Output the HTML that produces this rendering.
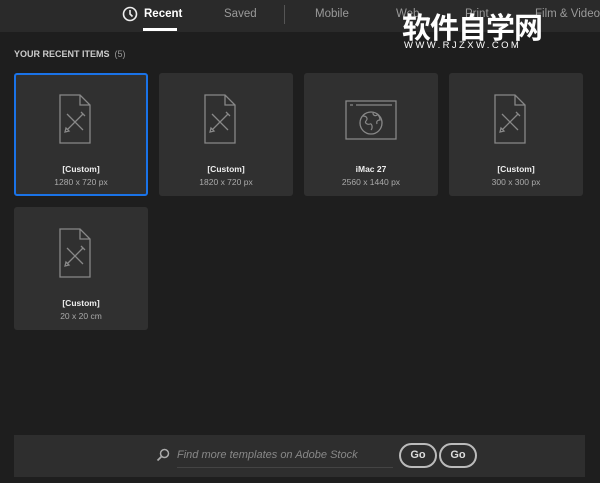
<!DOCTYPE html>
<html><head><meta charset="utf-8"><style>
*{margin:0;padding:0;box-sizing:border-box}
body{width:600px;height:483px;background:#1e1e1e;font-family:"Liberation Sans",sans-serif;position:relative;overflow:hidden;color:#ccc}
.top{position:absolute;left:0;top:0;width:600px;height:32px;background:#2a2a2a}
.tab{position:absolute;top:8px;font-size:11.5px;color:#9a9a9a;white-space:nowrap}
.card{position:absolute;width:134px;height:123px;background:#303030;border-radius:3px}
.card.sel{border:2px solid #1a73e8}
.card svg{position:absolute;left:44px;top:20px}
.t1{position:absolute;top:91px;width:100%;text-align:center;font-size:8.5px;color:#eee;font-weight:bold}
.t2{position:absolute;top:104px;width:100%;text-align:center;font-size:8.5px;color:#aaa}
.sel .t1{top:89px}.sel .t2{top:102px}.sel svg{left:42px;top:18px}
.go{position:absolute;top:443px;width:38px;height:25px;border:2px solid #bbb;border-radius:13px;font-size:11px;color:#ddd;font-weight:bold;text-align:center;line-height:21px}
</style></head><body>
<div class="top"></div>
<svg style="position:absolute;left:122px;top:6px" width="16" height="16" viewBox="0 0 16 16"><circle cx="8" cy="8" r="6.5" fill="none" stroke="#eee" stroke-width="1.6"/><path d="M8 4v4l2.5 2.5" fill="none" stroke="#eee" stroke-width="1.6"/></svg>
<div class="tab" style="left:144px;color:#fff;font-weight:bold">Recent</div>
<div style="position:absolute;left:143px;top:28px;width:34px;height:3px;background:#fff"></div>
<div class="tab" style="left:224px">Saved</div>
<div style="position:absolute;left:284px;top:5px;width:1px;height:19px;background:#555"></div>
<div class="tab" style="left:315px">Mobile</div>
<div class="tab" style="left:396px">Web</div>
<div class="tab" style="left:465px">Print</div>
<div class="tab" style="left:535px">Film &amp; Video</div>
<div style="position:absolute;left:402px;top:10px;font-family:'Noto Sans CJK SC',sans-serif;font-size:29px;font-weight:bold;color:#fff;line-height:32px;letter-spacing:-1px">软件自学网</div>
<div style="position:absolute;left:404px;top:40px;font-size:9.5px;color:#fff;letter-spacing:2.4px">WWW.RJZXW.COM</div>
<div style="position:absolute;left:14px;top:49px;font-size:9px;color:#ccc;font-weight:bold">YOUR RECENT ITEMS <span style="font-weight:normal;color:#999">&nbsp;(5)</span></div>

<div class="card sel" style="left:14px;top:73px"><svg width="34" height="52" viewBox="0 0 34 52"><path d="M2 2h20l10 10v38H2z M22 2v10h10" fill="none" stroke="#888" stroke-width="1.3"/><path d="M9 21l16 16M25 21L9 37M23 19l4 4M7 39l1-4 3 3z" fill="none" stroke="#888" stroke-width="1.3"/></svg><div class="t1">[Custom]</div><div class="t2">1280 x 720 px</div></div>
<div class="card" style="left:159px;top:73px"><svg width="34" height="52" viewBox="0 0 34 52"><path d="M2 2h20l10 10v38H2z M22 2v10h10" fill="none" stroke="#888" stroke-width="1.3"/><path d="M9 21l16 16M25 21L9 37M23 19l4 4M7 39l1-4 3 3z" fill="none" stroke="#888" stroke-width="1.3"/></svg><div class="t1">[Custom]</div><div class="t2">1820 x 720 px</div></div>
<div class="card" style="left:304px;top:73px"><svg style="left:41px;top:27px" width="52" height="40" viewBox="0 0 52 40"><rect x="1" y="1" width="50" height="38" fill="none" stroke="#888" stroke-width="1.3"/><path d="M5 5h3M11 5h36" stroke="#888" stroke-width="1.3"/><circle cx="26" cy="23" r="11" fill="none" stroke="#888" stroke-width="1.3"/><path d="M18 16c4 0 5 3 3 5s2 4 4 3 3 4 1 6M28 13c0 3 3 3 4 2s3 2 3 5c-2 0-4 1-3 4" fill="none" stroke="#888" stroke-width="1.2"/></svg><div class="t1">iMac 27</div><div class="t2">2560 x 1440 px</div></div>
<div class="card" style="left:449px;top:73px"><svg width="34" height="52" viewBox="0 0 34 52"><path d="M2 2h20l10 10v38H2z M22 2v10h10" fill="none" stroke="#888" stroke-width="1.3"/><path d="M9 21l16 16M25 21L9 37M23 19l4 4M7 39l1-4 3 3z" fill="none" stroke="#888" stroke-width="1.3"/></svg><div class="t1">[Custom]</div><div class="t2">300 x 300 px</div></div>
<div class="card" style="left:14px;top:207px"><svg width="34" height="52" viewBox="0 0 34 52"><path d="M2 2h20l10 10v38H2z M22 2v10h10" fill="none" stroke="#888" stroke-width="1.3"/><path d="M9 21l16 16M25 21L9 37M23 19l4 4M7 39l1-4 3 3z" fill="none" stroke="#888" stroke-width="1.3"/></svg><div class="t1">[Custom]</div><div class="t2">20 x 20 cm</div></div>

<div style="position:absolute;left:14px;top:435px;width:571px;height:42px;background:#2e2e2e"></div>
<svg style="position:absolute;left:156px;top:448px" width="14" height="14" viewBox="0 0 14 14"><circle cx="8.5" cy="5.5" r="4" fill="none" stroke="#aaa" stroke-width="1.5"/><path d="M5.5 8.5L1.5 12.5" stroke="#aaa" stroke-width="1.8"/></svg>
<div style="position:absolute;left:177px;top:449px;font-size:11px;font-style:italic;color:#888">Find more templates on Adobe Stock</div>
<div style="position:absolute;left:177px;top:467px;width:216px;height:1px;background:#444"></div>
<div class="go" style="left:399px">Go</div>
<div class="go" style="left:439px">Go</div>
</body></html>
